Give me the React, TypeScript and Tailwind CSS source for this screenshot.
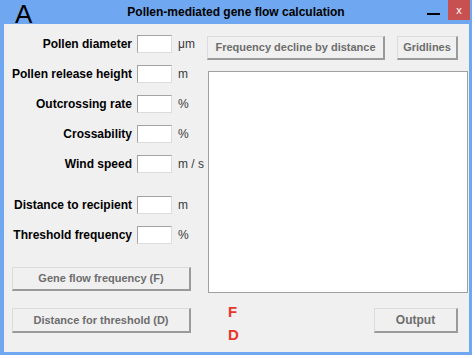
const font = { fontFamily: '"Liberation Sans", Arial, sans-serif' };

const fields = [
  { label: "Pollen diameter", unit: "μm" },
  { label: "Pollen release height", unit: "m" },
  { label: "Outcrossing rate", unit: "%" },
  { label: "Crossability", unit: "%" },
  { label: "Wind speed", unit: "m / s" },
];

const fields2 = [
  { label: "Distance to recipient", unit: "m" },
  { label: "Threshold frequency", unit: "%" },
];

function Row({ label, unit, className = "" }: { label: string; unit: string; className?: string }) {
  return (
    <div className={`flex items-center h-[18px] ${className}`}>
      <div className="w-[128px] text-right text-[12px] font-bold text-black whitespace-nowrap">{label}</div>
      <input className="ml-[5px] w-[35px] h-[18px] bg-white border border-[#dcdcdc] border-t-[#a3a3a3] border-l-[#a3a3a3] outline-none" />
      <span className="ml-[6px] text-[12px] text-[#3a3a3a] whitespace-nowrap">{unit}</span>
    </div>
  );
}

function Btn({ children, className = "" }: { children: React.ReactNode; className?: string }) {
  return (
    <button
      className={`flex items-center justify-center bg-[#f0f0f0] border border-t-[#dcdcdc] border-l-[#dcdcdc] border-b-2 border-r-2 border-b-[#9a9a9a] border-r-[#9a9a9a] text-[11px] font-bold text-[#6d6d6d] whitespace-nowrap ${className}`}
    >
      {children}
    </button>
  );
}

export default function App() {
  return (
    <div className="w-[475px] h-[358px] bg-white" style={font}>
      <div className="w-[472px] h-[355px] bg-[#6fa8f0] flex flex-col">
        <div className="h-[24px] grid grid-cols-[1fr_auto_1fr] items-center">
          <div className="pl-[15px] h-[24px] pt-[4px] text-[26px] leading-[20px] text-black">A</div>
          <div className="text-[12px] font-bold text-black">Pollen-mediated gene flow calculation</div>
          <div className="flex justify-end items-start self-start h-[24px]">
            <div className="w-[13px] h-[2px] bg-black mt-[13px] mr-[8px]" />
            <div className="w-[22px] h-[20px] bg-[#c75050] mr-[2px] flex items-center justify-center text-white text-[11px] leading-none">
              x
            </div>
          </div>
        </div>
        <div className="flex-1 ml-[4px] mr-[3px] mb-[3px] bg-[#f0f0f0] flex">
          <div className="w-[203px] pt-[11px] flex flex-col">
            {fields.map((f, i) => (
              <Row key={f.label} label={f.label} unit={f.unit} className={i ? "mt-[12px]" : ""} />
            ))}
            {fields2.map((f, i) => (
              <Row key={f.label} label={f.label} unit={f.unit} className={i ? "mt-[12px]" : "mt-[23px]"} />
            ))}
            <Btn className="mt-[23px] ml-[8px] w-[179px] h-[24px]">Gene flow frequency (F)</Btn>
            <Btn className="mt-[17px] ml-[8px] w-[179px] h-[25px]">Distance for threshold (D)</Btn>
          </div>
          <div className="flex-1 pt-[12px] flex flex-col">
            <div className="flex">
              <Btn className="w-[178px] h-[24px]">Frequency decline by distance</Btn>
              <Btn className="ml-[12px] w-[61px] h-[24px]">Gridlines</Btn>
            </div>
            <div className="mt-[11px] ml-[1px] w-[260px] h-[222px] bg-white border border-[#a0a0a0]" />
            <div className="flex items-start">
              <div className="ml-[21px] mt-[7px] flex flex-col text-[15px] leading-[23px] font-bold text-[#e8372a]">
                <span>F</span>
                <span>D</span>
              </div>
              <Btn className="ml-auto mr-[11px] mt-[15px] w-[84px] h-[25px] text-[12px]">Output</Btn>
            </div>
          </div>
        </div>
      </div>
    </div>
  );
}
